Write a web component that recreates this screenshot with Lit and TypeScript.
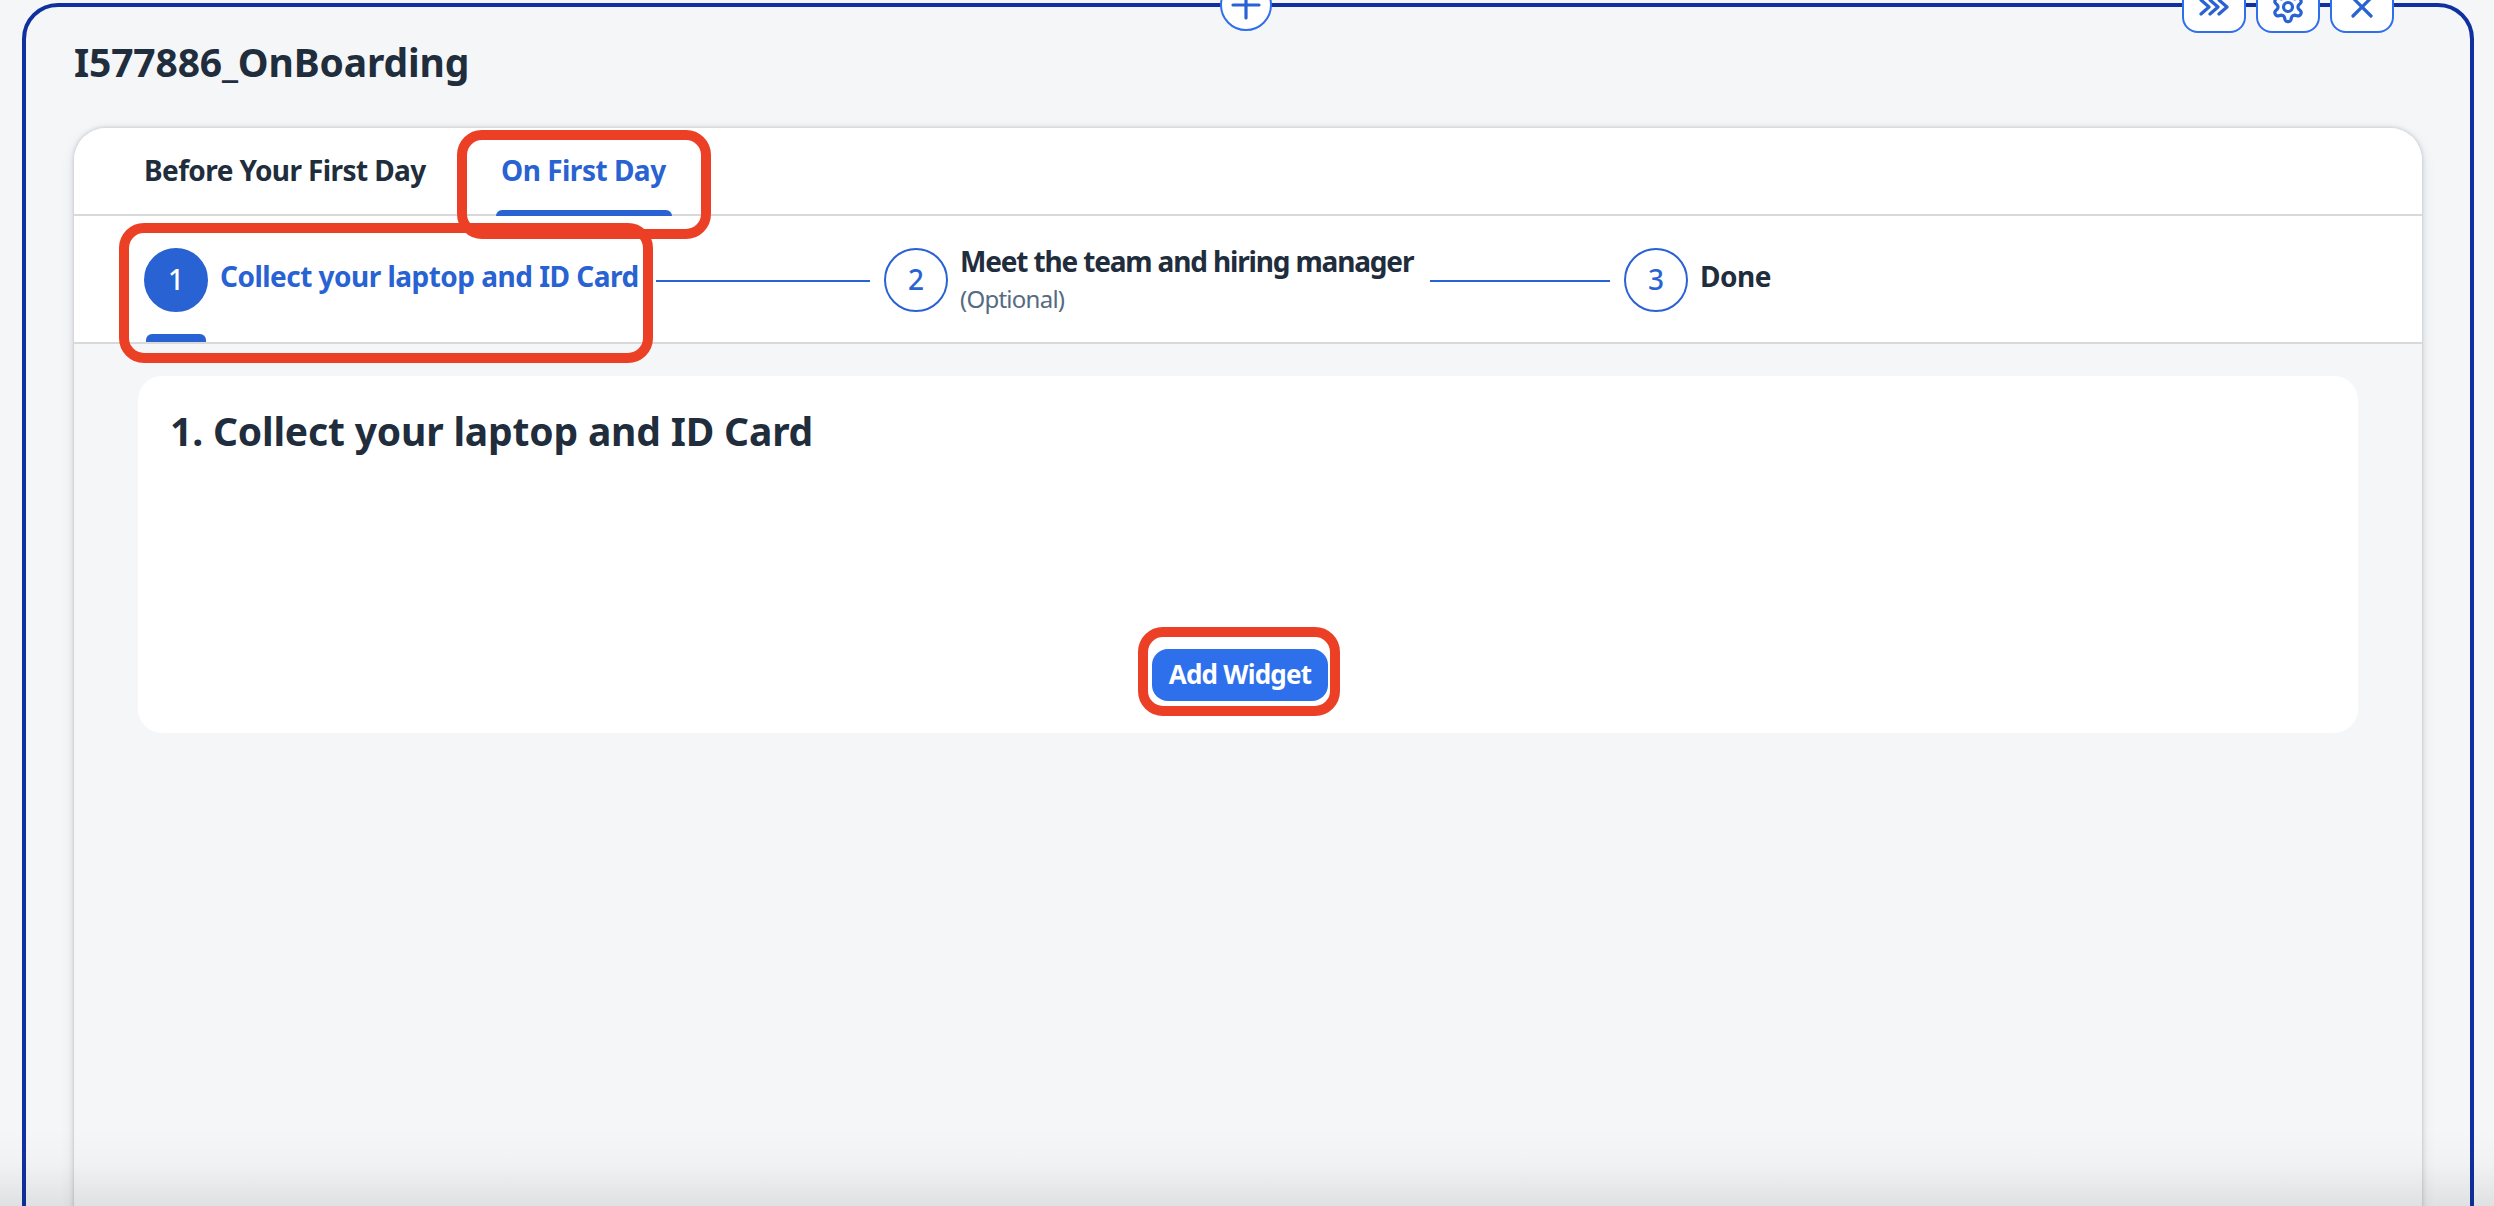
import { LitElement, html, svg, css } from "lit";
import { customElement } from "lit/decorators.js";

/** Closed outline of a six-toothed cog around the origin. */
function cogPath(): string {
  const pts: string[] = [];
  for (let i = 0; i < 120; i++) {
    const a = (i / 120) * Math.PI * 2;
    const c = Math.tanh(1.4 * Math.cos(6 * (a - Math.PI / 2))) / Math.tanh(1.4);
    const r = 12.3 + 2.3 * c;
    pts.push(`${(Math.cos(a) * r).toFixed(2)} ${(Math.sin(a) * r).toFixed(2)}`);
  }
  return `M${pts.join("L")}Z`;
}

const chevrons = svg`<path d="M-12 -7L-4 0L-12 7M-3 -7L5 0L-3 7M6 -7L14 0L6 7" transform="translate(-1 0)" />`;
const cog = svg`<path d="${cogPath()}" /><circle r="4.5" />`;
const cross = svg`<path d="M-9 -9L9 9M9 -9L-9 9" />`;

@customElement("app-root")
export class AppRoot extends LitElement {
  static styles = css`
    :host {
      display: block;
      position: relative;
      box-sizing: border-box;
      width: 100%;
      height: 1206px;
      padding: 3px 20px 0 22px;
      overflow: hidden;
      background: #f4f6f8;
      color: #1f2d3d;
      font-family: "Noto Sans", "Open Sans", sans-serif;
      font-weight: 700;
      font-size: 28px;
      line-height: 38px;
    }
    * { box-sizing: border-box; }
    svg { display: block; fill: none; stroke: #2962d2; stroke-width: 3.2; stroke-linecap: round; stroke-linejoin: round; }
    .frame {
      height: 1260px;
      border: 4px solid #1030a0;
      border-radius: 36px;
      padding: 30px 48px 0;
      background: #f4f6f8;
    }
    .title { margin: 0; height: 91px; font-size: 39px; line-height: 50px; letter-spacing: -0.15px; white-space: nowrap; }
    .panel {
      height: 1150px;
      border-radius: 32px;
      box-shadow: 0 0 4px rgba(34, 45, 60, 0.26), 0 4px 14px rgba(34, 45, 60, 0.1);
      background: #f4f6f8;
      overflow: hidden;
    }
    .tabs { display: flex; height: 88px; padding-left: 70px; gap: 65px; background: #fff; border-bottom: 2px solid #d9d9d9; }
    .tab { display: flex; flex-direction: column; justify-content: space-between; width: 287px; height: 88px; padding-top: 23px; letter-spacing: -0.6px; white-space: nowrap; }
    .tab.on { width: 176px; padding: 23px 5px 0; letter-spacing: -0.5px; color: #2962d2; }
    .tab.on::after { content: ""; height: 6px; margin: 0 -5px; border-radius: 6px 6px 0 0; background: #2962d2; }
    .steps { display: flex; height: 128px; padding-left: 70px; background: #fff; border-bottom: 2px solid #d9d9d9; }
    .step { display: flex; width: 740px; padding-top: 32px; }
    .num {
      flex: none; display: flex; align-items: center; justify-content: center;
      width: 64px; height: 64px; padding-bottom: 3px; border: 2px solid #2962d2; border-radius: 50%;
      color: #2962d2; font-weight: 500;
    }
    .mark { display: flex; flex-direction: column; justify-content: space-between; align-items: center; height: 94px; }
    .current .num { background: #2962d2; color: #fff; }
    .current .mark::after { content: ""; width: 60px; height: 8px; border-radius: 6px 6px 0 0; background: #2962d2; }
    .label { padding: 9px 17px 0 12px; letter-spacing: -0.52px; white-space: nowrap; }
    .current .label { color: #2962d2; }
    .label.two { padding-top: 0; margin-top: -6px; letter-spacing: -1.16px; }
    .note { font-size: 24px; line-height: 38px; font-weight: 400; letter-spacing: -0.75px; color: #556b82; }
    .rule { flex: 1; height: 2px; margin: 32px 14px 0 0; background: #2962d2; }
    .card {
      display: flex; flex-direction: column; align-items: center; justify-content: space-between;
      height: 357px; margin: 32px 64px 0; padding: 30px 32px 32px; border-radius: 24px; background: #fff;
    }
    .heading { margin: 0; align-self: stretch; font-size: 39px; line-height: 50px; letter-spacing: -0.17px; white-space: nowrap; }
    .add {
      width: 176px; height: 52px; margin-right: 16px; padding: 0 0 2px; border: 0; border-radius: 16px;
      background: #2e6feb; color: #fff; font: 700 26px/50px "Noto Sans", "Open Sans", sans-serif; letter-spacing: -0.75px; white-space: nowrap;
    }
    .tools { position: absolute; top: -31px; right: 100px; display: flex; gap: 10px; }
    .tool { width: 64px; height: 64px; padding: 0; border: 2px solid #2e6feb; border-radius: 16px; background: #fff; display: flex; align-items: flex-end; justify-content: center; }
    .tool svg { margin-bottom: 4px; }
    .insert { position: absolute; top: -21px; left: 1220px; width: 52px; height: 52px; padding: 0; border: 2px solid #2e6feb; border-radius: 50%; background: #fff; display: flex; align-items: center; justify-content: center; }
    .ring { position: absolute; border: 10px solid #eb4026; border-radius: 25px; pointer-events: none; }
    .ring-tab { left: 457px; top: 130px; width: 254px; height: 109px; }
    .ring-step { left: 119px; top: 223px; width: 534px; height: 140px; }
    .ring-add { left: 1138px; top: 627px; width: 202px; height: 89px; }
    .fade { position: absolute; left: 0; right: 0; bottom: 0; height: 76px; background: linear-gradient(rgba(0, 0, 0, 0), rgba(20, 20, 10, 0.02) 45%, rgba(20, 20, 10, 0.095)); pointer-events: none; }
  `;

  private tool(name: string, icon: unknown) {
    return html`<button class="tool" aria-label=${name}>
      <svg width="44" height="40" viewBox="-22 -20 44 40">${icon}</svg>
    </button>`;
  }

  render() {
    return html`
      <div class="frame">
        <h1 class="title">I577886_OnBoarding</h1>
        <section class="panel">
          <nav class="tabs">
            <div class="tab">Before Your First Day</div>
            <div class="tab on">On First Day</div>
          </nav>
          <div class="steps">
            <div class="step current">
              <div class="mark"><div class="num">1</div></div>
              <div class="label">Collect your laptop and ID Card</div>
              <div class="rule"></div>
            </div>
            <div class="step">
              <div class="mark"><div class="num">2</div></div>
              <div class="label two">
                <div>Meet the team and hiring manager</div>
                <div class="note">(Optional)</div>
              </div>
              <div class="rule"></div>
            </div>
            <div class="step">
              <div class="mark"><div class="num">3</div></div>
              <div class="label">Done</div>
            </div>
          </div>
          <div class="card">
            <h2 class="heading">1. Collect your laptop and ID Card</h2>
            <button class="add">Add Widget</button>
          </div>
        </section>
      </div>
      <button class="insert" aria-label="Add section">
        <svg width="40" height="40" viewBox="-20 -20 40 40"><path d="M-13 0H13M0 -13V13" /></svg>
      </button>
      <div class="tools">
        ${this.tool("Expand", chevrons)} ${this.tool("Settings", cog)} ${this.tool("Close", cross)}
      </div>
      <div class="ring ring-tab"></div>
      <div class="ring ring-step"></div>
      <div class="ring ring-add"></div>
      <div class="fade"></div>
    `;
  }
}
